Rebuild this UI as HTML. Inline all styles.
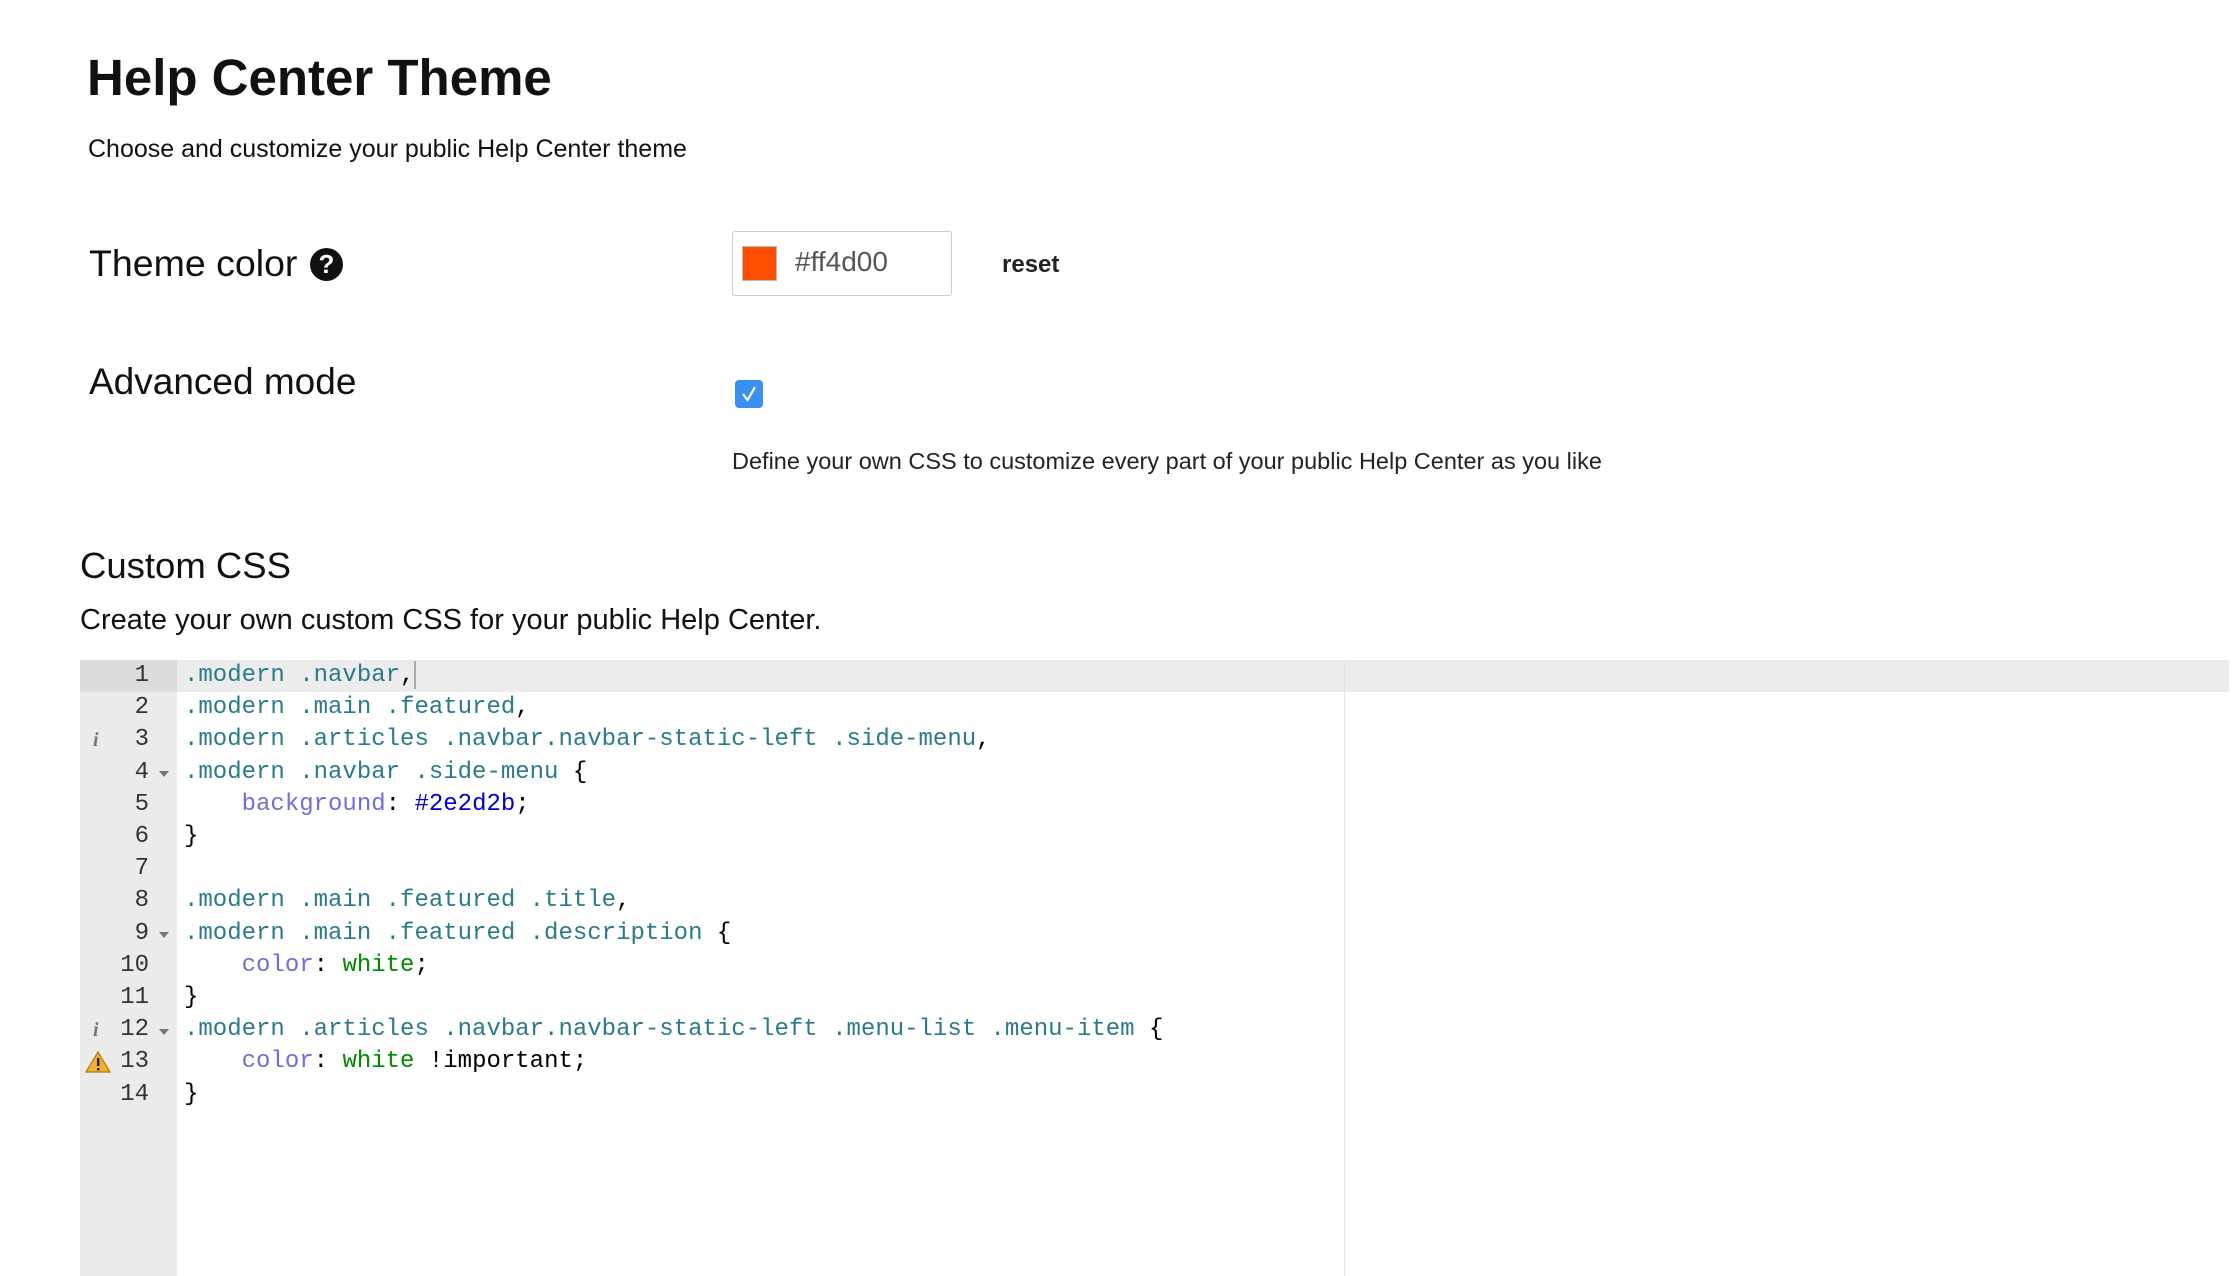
<!DOCTYPE html>
<html><head><meta charset="utf-8">
<style>
html,body{margin:0;padding:0;background:#fff;width:2240px;height:1276px;overflow:hidden;font-family:"Liberation Sans",sans-serif;color:#111;}
.a{position:absolute;white-space:nowrap;}
.ed{position:absolute;left:80px;top:660px;width:2149px;height:616px;background:#fff;}
.gut{position:absolute;left:0;top:0;width:97px;height:616px;background:#ebebeb;}
.hl{position:absolute;left:97px;top:0;right:0;height:32px;background:#ececec;}
.ghl{position:absolute;left:0;top:0;width:97px;height:32px;background:#dcdcdc;}
.pm{position:absolute;left:1264px;top:0;width:1px;height:616px;background:#e4e4e4;}
.ln{position:absolute;left:0;width:69px;text-align:right;font:24px/32.2px "Liberation Mono",monospace;color:#333;}
.code{position:absolute;left:104px;top:0;font:24px/32.2px "Liberation Mono",monospace;color:#000;white-space:pre;}
.s{color:#2b7a8a}.p{color:#6f6fdb}.c{color:#0000cd}.g{color:#008a00}
.fold{position:absolute;left:79px;width:0;height:0;border-left:5px solid transparent;border-right:5px solid transparent;border-top:6px solid #777;}
.info{position:absolute;left:13px;font:italic bold 20px/32px "Liberation Serif",serif;color:#777;}
</style></head><body>
<div class="a" style="left:87px;top:48px;font-size:51px;font-weight:bold;">Help Center Theme</div>
<div class="a" style="left:88px;top:135px;font-size:25px;">Choose and customize your public Help Center theme</div>

<div class="a" style="left:89px;top:242px;font-size:37.5px;">Theme color</div>
<div class="a" style="left:310px;top:248px;width:33px;height:33px;border-radius:50%;background:#111;color:#fff;font:bold 26px/33px 'Liberation Sans',sans-serif;text-align:center;">?</div>
<div class="a" style="left:732px;top:231px;width:218px;height:63px;border:1px solid #ccc;border-radius:3px;"></div>
<div class="a" style="left:742px;top:246px;width:33px;height:33px;background:#ff4d00;border:1px solid #bbb;"></div>
<div class="a" style="left:795px;top:246px;font-size:28px;color:#555;">#ff4d00</div>
<div class="a" style="left:1002px;top:251px;font-size:24px;font-weight:bold;color:#222;">reset</div>

<div class="a" style="left:89px;top:361px;font-size:37px;">Advanced mode</div>
<div class="a" style="left:735px;top:380px;width:28px;height:28px;border-radius:4px;background:#3a90f0;"></div>
<svg class="a" style="left:735px;top:380px" width="28" height="28"><path d="M8 14 L12.5 20 L20 7" stroke="#fff" stroke-width="2.2" fill="none"/></svg>
<div class="a" style="left:732px;top:448px;font-size:23.5px;color:#222;">Define your own CSS to customize every part of your public Help Center as you like</div>

<div class="a" style="left:80px;top:545px;font-size:36.5px;">Custom CSS</div>
<div class="a" style="left:80px;top:604px;font-size:29px;">Create your own custom CSS for your public Help Center.</div>

<div class="ed">
<div class="gut"></div><div class="ghl"></div><div class="hl"></div><div class="pm"></div>
<div class="ln" style="top:0">1<br>2<br>3<br>4<br>5<br>6<br>7<br>8<br>9<br>10<br>11<br>12<br>13<br>14</div>
<div class="fold" style="top:111px"></div><div class="fold" style="top:272px"></div><div class="fold" style="top:369px"></div>
<div class="info" style="top:64px">i</div><div class="info" style="top:354px">i</div>
<svg class="a" style="left:5px;top:390px" width="26" height="24"><path d="M13 2 L25 22 L1 22 Z" fill="#f0b030" stroke="#b07800" stroke-width="1.2"/><rect x="12" y="8" width="2.4" height="8" fill="#222"/><rect x="12" y="18" width="2.4" height="2.4" fill="#222"/></svg>
<div class="code"><span class="s">.modern .navbar</span>,<span style="display:inline-block;width:2px;height:28px;background:#aaa;vertical-align:middle"></span>
<span class="s">.modern .main .featured</span>,
<span class="s">.modern .articles .navbar.navbar-static-left .side-menu</span>,
<span class="s">.modern .navbar .side-menu</span> {
    <span class="p">background</span>: <span class="c">#2e2d2b</span>;
}

<span class="s">.modern .main .featured .title</span>,
<span class="s">.modern .main .featured .description</span> {
    <span class="p">color</span>: <span class="g">white</span>;
}
<span class="s">.modern .articles .navbar.navbar-static-left .menu-list .menu-item</span> {
    <span class="p">color</span>: <span class="g">white</span> !important;
}</div>
</div>
</body></html>
